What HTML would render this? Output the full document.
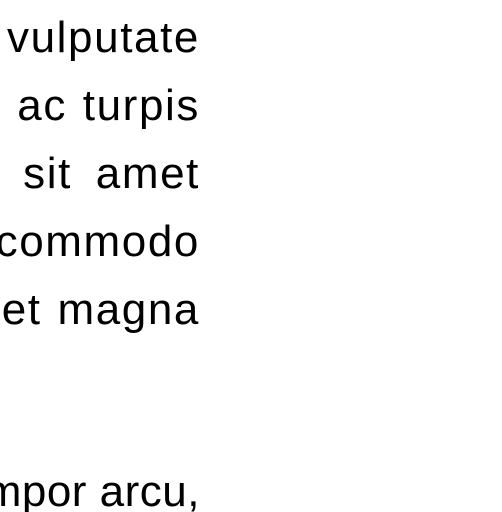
<!DOCTYPE html>
<html><head><meta charset="utf-8"><style>
html,body{margin:0;padding:0;background:#fff;width:502px;height:512px;overflow:hidden;position:relative}
.l{position:absolute;right:302px;font-family:"Liberation Sans",sans-serif;font-size:44px;line-height:1;color:#000;white-space:pre;letter-spacing:1.6px}
</style></head><body>
<div class="l" style="top:16px">vulputate</div>
<div class="l" style="top:84px;word-spacing:2px">ac turpis</div>
<div class="l" style="top:152px;word-spacing:10px">sit amet</div>
<div class="l" style="top:220px">commodo</div>
<div class="l" style="top:288px;word-spacing:2px">et magna</div>
<div class="l" style="top:470px;letter-spacing:0.5px">mpor arcu,</div>
</body></html>
